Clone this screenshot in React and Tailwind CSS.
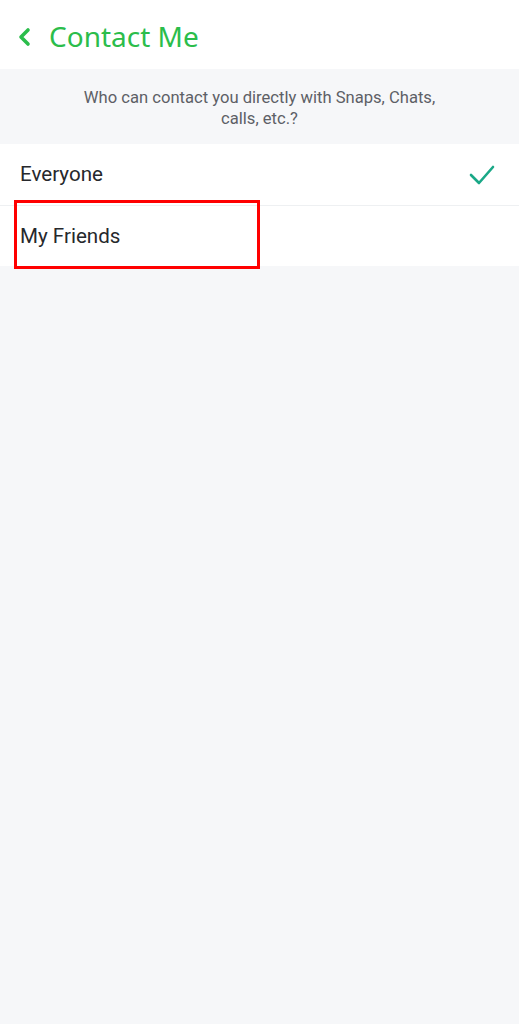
import React from 'react';

const options = [
  { label: 'Everyone', selected: true },
  { label: 'My Friends', selected: false },
];

const App = () => {
  return (
    <div className="relative w-[519px] h-[1024px] bg-[#f6f7f9] font-['Roboto',sans-serif]">
      {/* header */}
      <div className="h-[69px] bg-white flex items-center pl-[16px]">
        <svg width="16" height="20" viewBox="0 0 16 20" className="mt-[4px]">
          <path d="M12 3 L5 10 L12 17" fill="none" stroke="#2bbd4b" strokeWidth="3.6" strokeLinecap="round" strokeLinejoin="round" />
        </svg>
        <h1 className="ml-[17px] mt-[2px] text-[28px] text-[#2bbd4b] font-['Noto_Sans',sans-serif]">
          Contact Me
        </h1>
      </div>

      {/* description */}
      <div className="h-[75px] flex items-center justify-center px-[40px]">
        <p className="text-center text-[16.6px] leading-[21px] text-[#5d6066] mt-[2px]">
          Who can contact you directly with Snaps, Chats,
          <br />
          calls, etc.?
        </p>
      </div>

      {/* options */}
      <div className="bg-white">
        {options.map((opt, i) => (
          <div
            key={opt.label}
            className={`h-[61px] flex items-center justify-between pl-[20px] pr-[24px] ${
              i > 0 ? 'border-t border-[#eef0f2]' : ''
            }`}
          >
            <span className="text-[20.6px] text-[#26282c]">{opt.label}</span>
            {opt.selected && (
              <svg width="26" height="22" viewBox="0 0 26 22">
                <path d="M2 11 L10 19 L24 3" fill="none" stroke="#1aa887" strokeWidth="2.6" strokeLinecap="round" strokeLinejoin="round" />
              </svg>
            )}
          </div>
        ))}
      </div>

      {/* highlight */}
      <div className="absolute left-[14px] top-[200px] w-[246px] h-[69px] border-[3px] border-[#ff0000]" />
    </div>
  );
};

export default App;
